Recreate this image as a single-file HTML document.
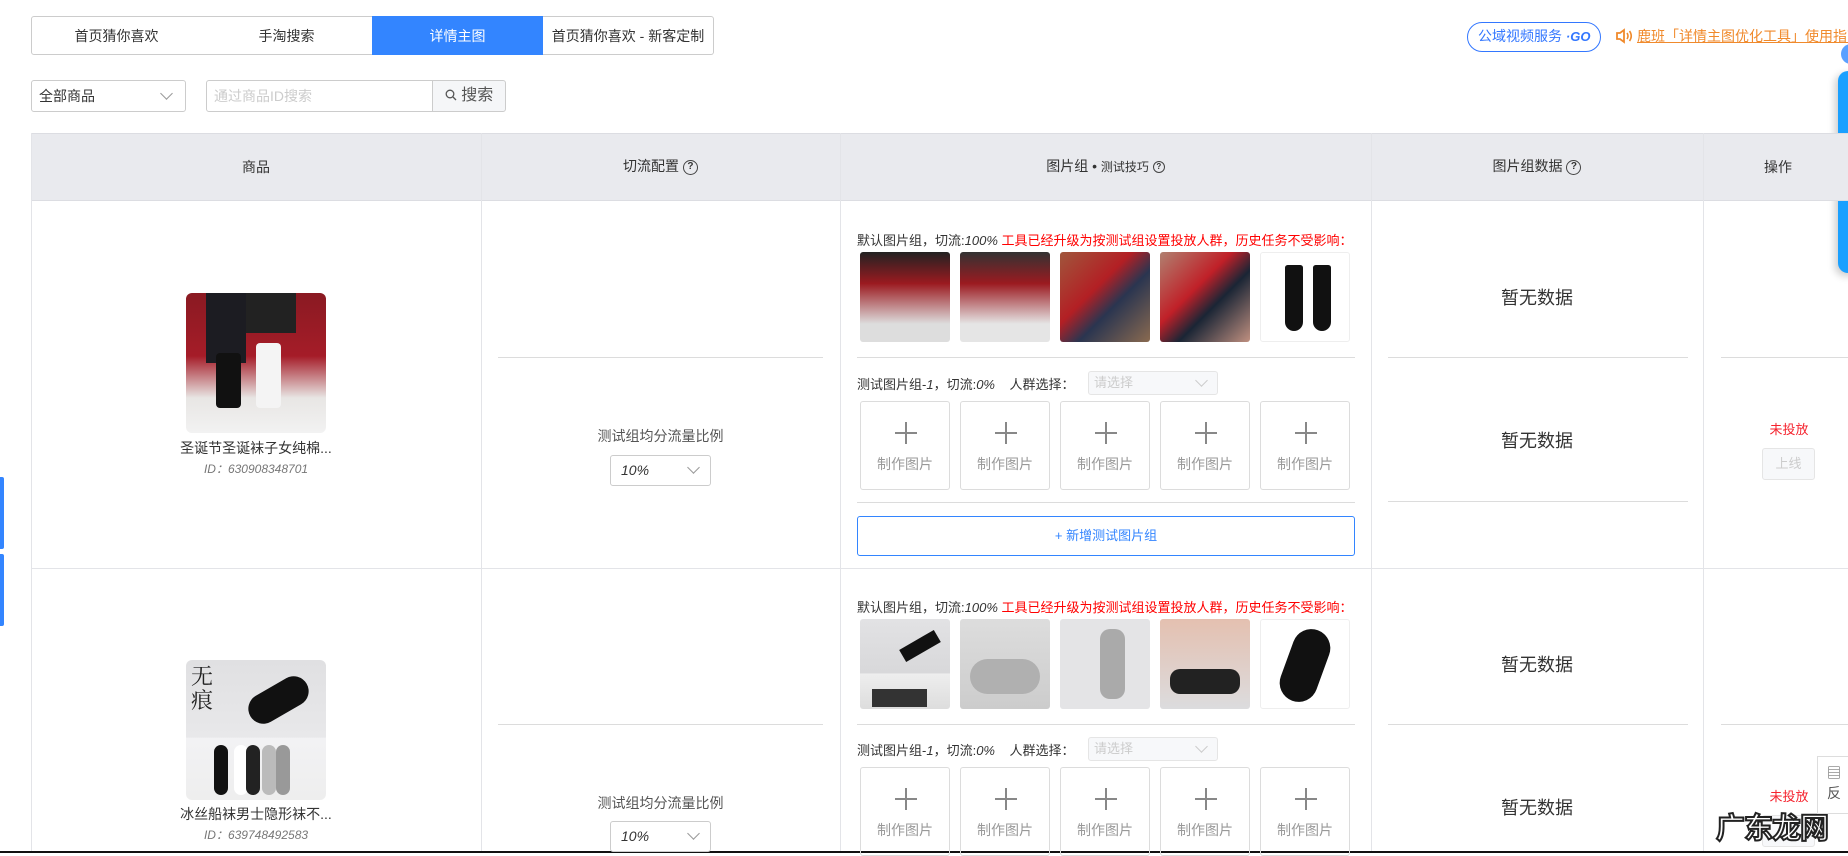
<!DOCTYPE html>
<html><head><meta charset="utf-8"><style>
*{box-sizing:border-box;margin:0;padding:0}
body{width:1848px;height:853px;overflow:hidden;background:#fff;font-family:"Liberation Sans","Noto Sans CJK SC",sans-serif;color:#333;position:relative;font-size:14px}
.a{position:absolute}
.tab{position:absolute;top:16px;height:39px;border:1px solid #ccc;display:flex;align-items:center;justify-content:center;font-size:14px;color:#333;background:#fff}
.vl{position:absolute;width:1px;background:#e3e4e8}
.hl{position:absolute;height:1px;background:#dcdcdc}
.img{position:absolute;width:90px;height:90px;border-radius:3px;overflow:hidden}
.box{position:absolute;width:90px;height:89px;border:1px solid #dcdcdc;border-radius:3px;text-align:center;color:#999;font-size:14px}
.box .p{position:absolute;left:34px;top:20px;width:22px;height:22px}
.box .p:before{content:"";position:absolute;left:10px;top:0;width:2px;height:22px;background:#888}
.box .p:after{content:"";position:absolute;top:10px;left:0;height:2px;width:22px;background:#888}
.box span{position:absolute;left:0;right:0;top:52px}
.c{text-align:center}
.q{display:inline-block;width:15px;height:15px;border:1.5px solid #444;border-radius:50%;font-size:10px;line-height:12px;text-align:center;vertical-align:middle;font-weight:bold}
.sel{position:absolute;border:1px solid #ccc;border-radius:3px;background:#fff}
.chev{position:absolute;width:9px;height:9px;border-right:1.3px solid #999;border-bottom:1.3px solid #999;transform:rotate(45deg)}
</style></head><body>

<div class="tab" style="left:31px;width:171px;border-radius:3px 0 0 3px">首页猜你喜欢</div>
<div class="tab" style="left:201px;width:172px;border-left:none">手淘搜索</div>
<div class="tab" style="left:372px;width:171px;background:#3385ff;color:#fff;border-color:#3385ff">详情主图</div>
<div class="tab" style="left:543px;width:171px;border-left:none;border-radius:0 3px 3px 0">首页猜你喜欢 - 新客定制</div>

<div class="a" style="left:1467px;top:22px;width:134px;height:30px;border:1.5px solid #3377ff;border-radius:15px;color:#3377ff;font-size:14px;line-height:27px;padding-left:10px">公域视频服务 <b style="font-style:italic;font-size:13px">·GO</b></div>
<svg class="a" style="left:1615px;top:27px" width="18" height="18" viewBox="0 0 18 18"><path d="M2 6h3l4-3v12l-4-3H2z" fill="none" stroke="#f08a2c" stroke-width="1.8"/><path d="M12 6q2 3 0 6M14.5 4q3.5 5 0 10" fill="none" stroke="#f08a2c" stroke-width="1.6"/></svg>
<div class="a" style="left:1637px;top:26px;color:#f08a2c;font-size:14px;white-space:nowrap;text-decoration:underline">鹿班「详情主图优化工具」使用指南</div>
<div class="a" style="left:1841px;top:44px;width:20px;height:20px;border-radius:50%;background:#5aa0ff"></div>
<div class="a" style="left:1838px;top:71px;width:30px;height:202px;background:#1aa0ff;border-radius:10px 0 0 10px;box-shadow:-3px 3px 8px rgba(0,0,0,.2)"></div>

<div class="sel" style="left:31px;top:80px;width:155px;height:32px;font-size:14px;line-height:30px;padding-left:7px">全部商品<div class="chev" style="left:130px;top:8px"></div></div>
<div class="sel" style="left:206px;top:80px;width:227px;height:32px;border-radius:3px 0 0 3px;color:#ccc;line-height:30px;padding-left:7px;font-size:14px">通过商品ID搜索</div>
<div class="sel" style="left:432px;top:80px;width:74px;height:32px;background:#f5f6f8;border-radius:0 3px 3px 0;color:#555;line-height:30px;text-align:center;font-size:16px"><svg width="12" height="12" viewBox="0 0 12 12" style="vertical-align:-1px"><circle cx="5" cy="5" r="3.8" fill="none" stroke="#555" stroke-width="1.3"/><path d="M8 8l3 3" stroke="#555" stroke-width="1.3"/></svg> 搜索</div>

<div class="a" style="left:31px;top:133px;width:1830px;height:68px;background:#e9eaee;border-top:1px solid #dcdde2;border-bottom:1px solid #dcdde2"></div>
<div class="a c" style="left:31px;top:157px;width:450px;font-size:14px">商品</div>
<div class="a c" style="left:481px;top:156px;width:359px;font-size:14px">切流配置 <span class="q">?</span></div>
<div class="a c" style="left:840px;top:156px;width:531px;font-size:14px">图片组 • <span style="font-size:12px">测试技巧</span> <span class="q" style="width:12px;height:12px;font-size:8px;line-height:9px;border-width:1px">?</span></div>
<div class="a c" style="left:1371px;top:156px;width:332px;font-size:14px">图片组数据 <span class="q">?</span></div>
<div class="a c" style="left:1703px;top:157px;width:150px;font-size:14px">操作</div>

<div class="vl" style="left:31px;top:133px;height:720px"></div>
<div class="vl" style="left:481px;top:133px;height:720px"></div>
<div class="vl" style="left:840px;top:133px;height:720px"></div>
<div class="vl" style="left:1371px;top:133px;height:720px"></div>
<div class="vl" style="left:1703px;top:133px;height:720px"></div>
<div class="hl" style="left:31px;top:568px;width:1817px;background:#e3e4e8"></div>
<div class="a" style="left:0;top:851px;width:1848px;height:2px;background:#111"></div>

<!-- row 1 -->
<div class="a" style="left:186px;top:293px;width:140px;height:140px;border-radius:6px;background:linear-gradient(180deg,#8a1a22 0%,#a51c28 45%,#e8e6e4 75%,#f2f2f2 100%);overflow:hidden">
<div class="a" style="left:20px;top:0;width:40px;height:70px;background:#1c1c22"></div><div class="a" style="left:60px;top:0;width:50px;height:40px;background:#222"></div>
<div class="a" style="left:30px;top:60px;width:25px;height:55px;background:#111;border-radius:4px"></div><div class="a" style="left:70px;top:50px;width:25px;height:65px;background:#f4f4f4;border-radius:4px"></div></div>
<div class="a c" style="left:31px;top:438px;width:450px;font-size:14px">圣诞节圣诞袜子女纯棉...</div>
<div class="a c" style="left:31px;top:460px;width:450px;font-size:12px;color:#777;font-style:italic">ID：630908348701</div>

<div class="hl" style="left:498px;top:357px;width:325px"></div>
<div class="a c" style="left:481px;top:426px;width:359px;font-size:14px;color:#555">测试组均分流量比例</div>
<div class="sel" style="left:610px;top:455px;width:101px;height:31px;line-height:29px;padding-left:10px;font-style:italic;font-size:14px">10%<div class="chev" style="left:78px;top:7px"></div></div>

<div class="a" style="left:857px;top:230px;font-size:13px;white-space:nowrap">默认图片组，切流:<i>100%</i> <span style="color:#f00">工具已经升级为按测试组设置投放人群，历史任务不受影响：</span></div>
<div class="img" style="left:860px;top:252px;background:linear-gradient(180deg,#222 0%,#9b1a20 35%,#ddd 80%)"></div>
<div class="img" style="left:960px;top:252px;background:linear-gradient(180deg,#333 0%,#9b1a20 35%,#e5e5e5 80%)"></div>
<div class="img" style="left:1060px;top:252px;background:linear-gradient(135deg,#a0563c,#b31f24 40%,#2a3550 60%,#8a6a50)"></div>
<div class="img" style="left:1160px;top:252px;background:linear-gradient(135deg,#b08070,#c02028 40%,#1a2535 60%,#c09080)"></div>
<div class="img" style="left:1260px;top:252px;background:#fff;border:1px solid #eee"><div class="a" style="left:24px;top:12px;width:18px;height:66px;background:#111;border-radius:3px 3px 10px 10px"></div><div class="a" style="left:52px;top:12px;width:18px;height:66px;background:#111;border-radius:3px 3px 10px 10px"></div></div>
<div class="hl" style="left:857px;top:357px;width:498px"></div>
<div class="a" style="left:857px;top:374px;font-size:13px">测试图片组-<i>1</i>，切流:<i>0%</i>&nbsp;&nbsp;&nbsp;&nbsp;人群选择：</div>
<div class="sel" style="left:1088px;top:371px;width:130px;height:24px;background:#f7f8fa;border-color:#e5e5e5;color:#ccc;font-size:13px;line-height:22px;padding-left:5px">请选择<div class="chev" style="left:108px;top:4px;border-color:#ccc"></div></div>
<div class="box" style="left:860px;top:401px"><div class="p"></div><span>制作图片</span></div>
<div class="box" style="left:960px;top:401px"><div class="p"></div><span>制作图片</span></div>
<div class="box" style="left:1060px;top:401px"><div class="p"></div><span>制作图片</span></div>
<div class="box" style="left:1160px;top:401px"><div class="p"></div><span>制作图片</span></div>
<div class="box" style="left:1260px;top:401px"><div class="p"></div><span>制作图片</span></div>
<div class="hl" style="left:857px;top:502px;width:498px"></div>
<div class="a c" style="left:857px;top:516px;width:498px;height:40px;border:1px solid #3385ff;border-radius:3px;color:#3385ff;line-height:38px;font-size:13px">+ 新增测试图片组</div>

<div class="a c" style="left:1371px;top:284px;width:332px;font-size:18px">暂无数据</div>
<div class="hl" style="left:1388px;top:357px;width:300px"></div>
<div class="a c" style="left:1371px;top:427px;width:332px;font-size:18px">暂无数据</div>
<div class="hl" style="left:1388px;top:501px;width:300px"></div>
<div class="hl" style="left:1721px;top:357px;width:127px"></div>
<div class="a c" style="left:1750px;top:419px;width:78px;color:#f5222d;font-size:13px">未投放</div>
<div class="a c" style="left:1762px;top:448px;width:53px;height:32px;border:1px solid #e5e5e5;border-radius:3px;background:#f7f8fa;color:#ccc;line-height:30px;font-size:13px">上线</div>

<!-- row 2 -->
<div class="a" style="left:186px;top:660px;width:140px;height:140px;border-radius:6px;background:linear-gradient(180deg,#e0e0e2 0%,#e8e8ea 55%,#f2f2f4 56%,#eee 100%);overflow:hidden">
<div class="a" style="left:5px;top:4px;font-family:'Noto Serif CJK SC',serif;font-size:22px;color:#222;line-height:24px">无<br>痕</div>
<div class="a" style="left:60px;top:25px;width:65px;height:30px;background:#111;border-radius:20px;transform:rotate(-30deg)"></div>
<div class="a" style="left:28px;top:85px;width:14px;height:50px;background:#111;border-radius:7px"></div><div class="a" style="left:48px;top:85px;width:14px;height:50px;background:#fff;border-radius:7px"></div><div class="a" style="left:60px;top:85px;width:14px;height:50px;background:#222;border-radius:7px"></div><div class="a" style="left:76px;top:85px;width:14px;height:50px;background:#bbb;border-radius:7px"></div><div class="a" style="left:90px;top:85px;width:14px;height:50px;background:#999;border-radius:7px"></div></div>
<div class="a c" style="left:31px;top:804px;width:450px;font-size:14px">冰丝船袜男士隐形袜不...</div>
<div class="a c" style="left:31px;top:826px;width:450px;font-size:12px;color:#777;font-style:italic">ID：639748492583</div>

<div class="hl" style="left:498px;top:724px;width:325px"></div>
<div class="a c" style="left:481px;top:793px;width:359px;font-size:14px;color:#555">测试组均分流量比例</div>
<div class="sel" style="left:610px;top:821px;width:101px;height:31px;line-height:29px;padding-left:10px;font-style:italic;font-size:14px">10%<div class="chev" style="left:78px;top:7px"></div></div>

<div class="a" style="left:857px;top:597px;font-size:13px;white-space:nowrap">默认图片组，切流:<i>100%</i> <span style="color:#f00">工具已经升级为按测试组设置投放人群，历史任务不受影响：</span></div>
<div class="img" style="left:860px;top:619px;background:linear-gradient(180deg,#e2e2e4 0%,#d8d8da 60%,#eee 61%,#ddd)"><div class="a" style="left:12px;top:70px;width:55px;height:18px;background:#333"></div><div class="a" style="left:40px;top:20px;width:40px;height:14px;background:#111;transform:rotate(-30deg)"></div></div>
<div class="img" style="left:960px;top:619px;background:linear-gradient(180deg,#ddd,#ccc)"><div class="a" style="left:10px;top:40px;width:70px;height:35px;background:#b0b0b0;border-radius:20px"></div></div>
<div class="img" style="left:1060px;top:619px;background:#e4e4e6"><div class="a" style="left:40px;top:10px;width:25px;height:70px;background:#aaa;border-radius:10px"></div></div>
<div class="img" style="left:1160px;top:619px;background:linear-gradient(180deg,#e4c0b0,#dcdcde)"><div class="a" style="left:10px;top:50px;width:70px;height:25px;background:#222;border-radius:10px"></div></div>
<div class="img" style="left:1260px;top:619px;background:#fff;border:1px solid #eee"><div class="a" style="left:25px;top:8px;width:38px;height:75px;background:#111;border-radius:20px;transform:rotate(20deg)"></div></div>
<div class="hl" style="left:857px;top:724px;width:498px"></div>
<div class="a" style="left:857px;top:740px;font-size:13px">测试图片组-<i>1</i>，切流:<i>0%</i>&nbsp;&nbsp;&nbsp;&nbsp;人群选择：</div>
<div class="sel" style="left:1088px;top:737px;width:130px;height:24px;background:#f7f8fa;border-color:#e5e5e5;color:#ccc;font-size:13px;line-height:22px;padding-left:5px">请选择<div class="chev" style="left:108px;top:4px;border-color:#ccc"></div></div>
<div class="box" style="left:860px;top:767px"><div class="p"></div><span>制作图片</span></div>
<div class="box" style="left:960px;top:767px"><div class="p"></div><span>制作图片</span></div>
<div class="box" style="left:1060px;top:767px"><div class="p"></div><span>制作图片</span></div>
<div class="box" style="left:1160px;top:767px"><div class="p"></div><span>制作图片</span></div>
<div class="box" style="left:1260px;top:767px"><div class="p"></div><span>制作图片</span></div>

<div class="a c" style="left:1371px;top:651px;width:332px;font-size:18px">暂无数据</div>
<div class="hl" style="left:1388px;top:724px;width:300px"></div>
<div class="a c" style="left:1371px;top:794px;width:332px;font-size:18px">暂无数据</div>
<div class="hl" style="left:1721px;top:724px;width:127px"></div>
<div class="a c" style="left:1750px;top:786px;width:78px;color:#f5222d;font-size:13px">未投放</div>
<div class="a c" style="left:1762px;top:815px;width:53px;height:32px;border:1px solid #e5e5e5;border-radius:3px;background:#f7f8fa"></div>
<div class="a" style="left:1716px;top:805px;font-size:29px;font-weight:bold;color:#fff;-webkit-text-stroke:2px #222;letter-spacing:-1px">广东龙网</div>
<div class="a" style="left:1817px;top:756px;width:40px;height:58px;border:1px solid #ddd;background:#fff;font-size:14px;color:#555;padding:6px 0 0 9px">▤<br>反</div>

<div class="a" style="left:0;top:477px;width:4px;height:72px;background:#3385ff;border-radius:0 2px 2px 0"></div>
<div class="a" style="left:0;top:554px;width:4px;height:72px;background:#3385ff;border-radius:0 2px 2px 0"></div>
</body></html>
